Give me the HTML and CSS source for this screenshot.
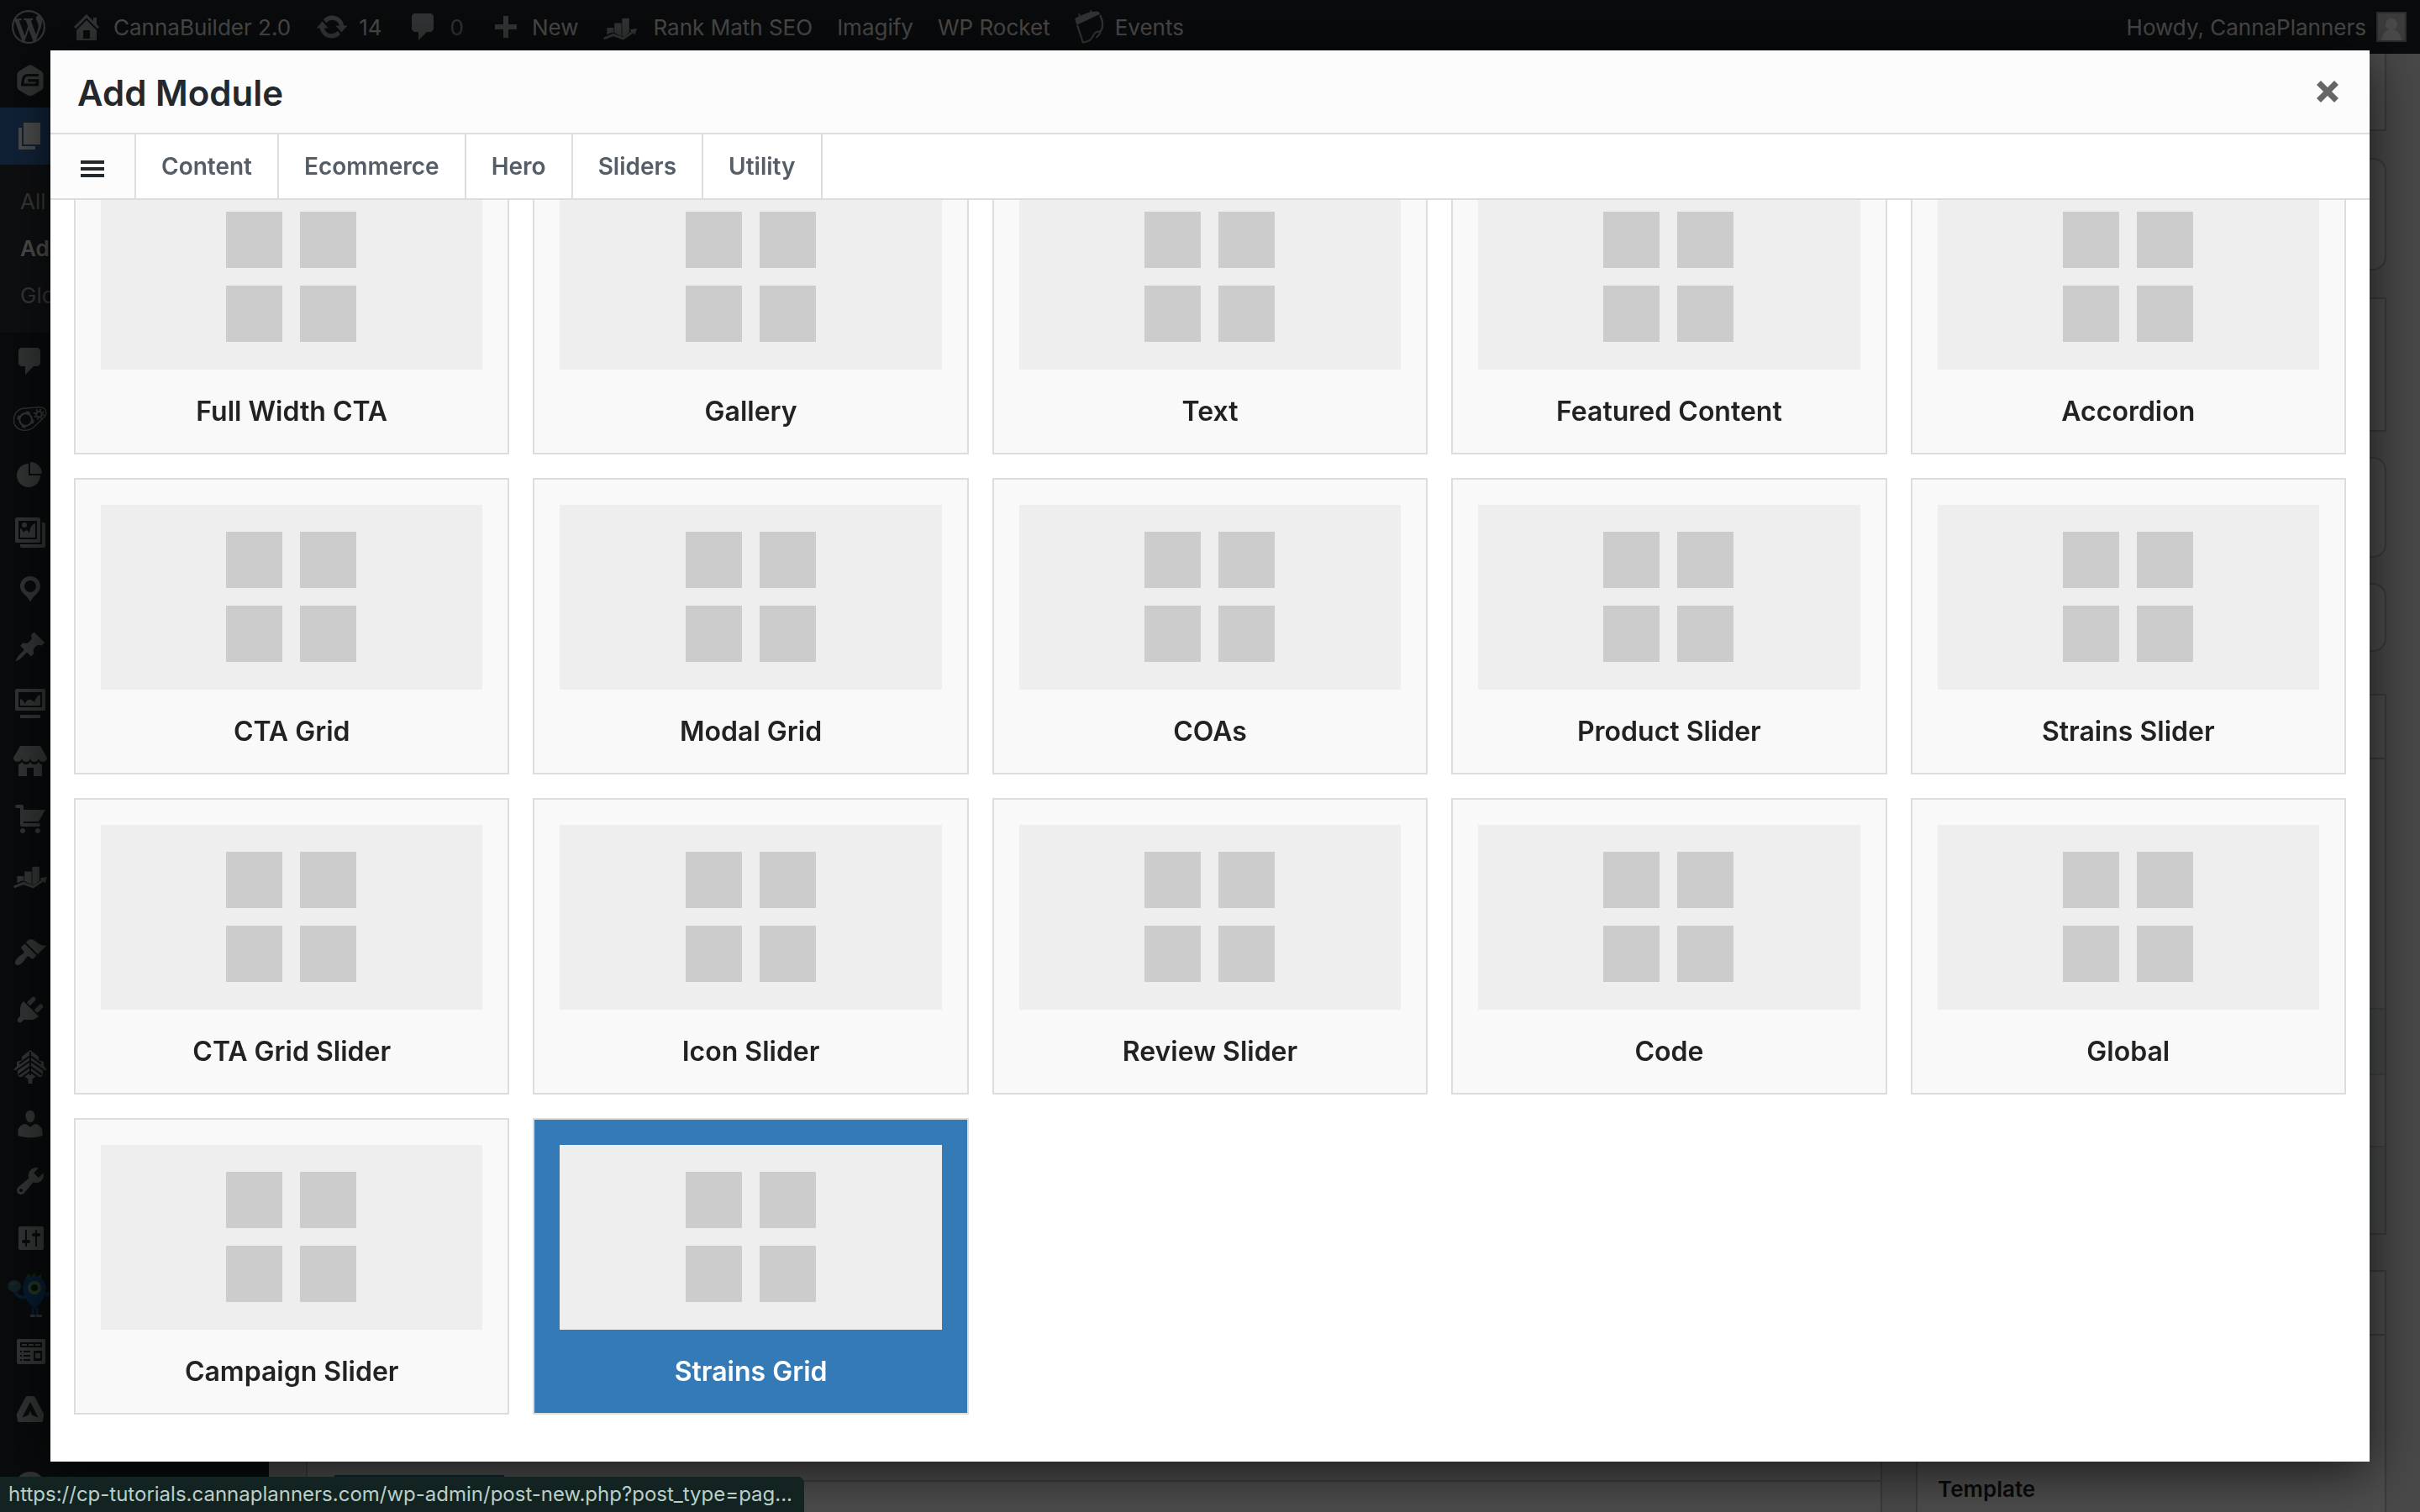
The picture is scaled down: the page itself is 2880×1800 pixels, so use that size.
FILE: index.html
```html
<!DOCTYPE html>
<html lang="en">
<head>
    <meta charset="UTF-8">
    <meta name="viewport" content="width=device-width, initial-scale=1.0">
    <title>Add New Page</title>
    <link rel="stylesheet" href="styles.css">
</head>
<body>
    <!-- shared icons -->
    <svg class="sprite" aria-hidden="true">
        <symbol id="blocks" viewBox="0 0 156 156">
            <path d="M0 0h67v67H0zM88 0h67v67H88zM0 88h67v67H0zM88 88h67v67H88z"/>
        </symbol>
        <symbol id="rank" viewBox="0 0 20 20">
            <path d="M2.2 10.500h4v3L5 13.200l-2.800 1.400zM6.600 7.700h4.200v7.800l-4.200-2zM11.200 4.900h4.200v8.300l-3.200 2.500-1-.2z"/>
            <path d="M0 16.400l5.900-2.500 5.900 2.100 4.800-3.100-.8-1.300 4.200-.6-1.200 3.700-.9-1.100-6 4.200-6-2.200-5.300 2z"/>
        </symbol>
        <symbol id="comment" viewBox="0 0 20 20">
            <path d="M5 2h9c1.100 0 2 .9 2 2v7c0 1.100-.9 2-2 2h-2l-5 5v-5H5c-1.100 0-2-.9-2-2V4c0-1.100.9-2 2-2z"/>
        </symbol>
    </svg>

    <header class="adminbar">
        <a href="#" aria-label="About WordPress"><svg viewBox="0 0 20 20"><path d="M20 10c0-5.510-4.490-10-10-10C4.480 0 0 4.490 0 10c0 5.520 4.480 10 10 10 5.510 0 10-4.480 10-10zM7.780 15.370L4.370 6.220c.55-.02 1.170-.08 1.170-.08.5-.06.44-1.130-.06-1.110 0 0-1.450.11-2.370.11-.18 0-.37 0-.58-.01C4.120 2.690 6.870 1.110 10 1.110c2.330 0 4.450.87 6.050 2.340-.68-.11-1.650.39-1.650 1.580 0 .74.45 1.360.9 2.100.35.61.55 1.360.55 2.460 0 1.490-1.400 5-1.400 5l-3.030-8.370c.54-.02.82-.17.82-.17.5-.05.44-1.250-.06-1.220 0 0-1.440.12-2.380.12-.87 0-2.330-.12-2.330-.12-.5-.03-.56 1.200-.06 1.220l.92.08 1.260 3.410zM17.410 10c.24-.64.74-1.870.43-4.250.7 1.290 1.050 2.710 1.050 4.250 0 3.290-1.730 6.240-4.400 7.780.97-2.590 1.940-5.200 2.920-7.780zM6.100 18.090C3.120 16.650 1.110 13.530 1.110 10c0-1.300.23-2.480.72-3.590C3.250 10.300 4.670 14.200 6.100 18.090zm4.030-6.630l2.580 6.980c-.86.29-1.760.45-2.710.45-.79 0-1.570-.11-2.290-.33.81-2.380 1.620-4.740 2.420-7.100z"/></svg></a>
        <a href="#"><svg viewBox="0 0 20 20"><path d="M16 8.500l1.530 1.530-1.060 1.060L10 4.600l-6.470 6.470-1.060-1.060L10 2.470l4 4v-2h2v4zm-6-2.460l6 5.990V18H4v-5.970zM12 17v-5H8v5h4z"/></svg>CannaBuilder 2.0</a>
        <a href="#"><svg viewBox="0 0 20 20"><path d="M10.200 3.280c3.530 0 6.430 2.610 6.920 6h2.080l-3.500 4-3.500-4h2.320c-.45-1.970-2.210-3.450-4.320-3.450-1.450 0-2.730.71-3.540 1.780L4.950 5.660C6.230 4.200 8.110 3.280 10.200 3.280zm-.4 13.440c-3.520 0-6.430-2.610-6.920-6H.8l3.500-4c1.170 1.330 2.330 2.670 3.500 4H5.480c.45 1.970 2.210 3.450 4.320 3.450 1.450 0 2.730-.71 3.540-1.780l1.710 1.950c-1.280 1.460-3.150 2.380-5.250 2.380z"/></svg>14</a>
        <a href="#" class="muted"><svg><use href="#comment"/></svg>0</a>
        <a href="#"><svg viewBox="0 0 20 20"><path d="M17 8.500v3h-5v5H9v-5H4v-3h5v-5h3v5h5z"/></svg>New</a>
        <a href="#" class="seo"><svg><use href="#rank"/></svg>Rank Math SEO</a>
        <a href="#">Imagify</a>
        <a href="#">WP Rocket</a>
        <a href="#"><svg class="events" viewBox="0 0 18 20"><path d="M.2 5.800Q0 4.900 1 4.400l1.600-.7L2 2.300l.7-.3.700 1.400 6-2.400L9 .2l.8-.2.500 1 2.700-.3q1.500 0 2.200 1.600L1.300 8.900z"/><path d="M1.500 9l3.400 10.300c4-.8 5-1.600 6.400-4.600.8-1.700 1.500-1.600 4.200-2.200 1.700-2.800 1.300-6-.4-9.500" fill="none" stroke="currentColor" stroke-width="1.100"/><path d="M15.600 12.300q-.8 2.900-3 4.100" fill="none" stroke="currentColor"/></svg>Events</a>
        <a href="#" class="account">Howdy, CannaPlanners<svg class="avatar" viewBox="0 0 36 36"><path class="frame" d="M0 0h36v36H0z"/><path class="bg" d="M2 2h32v32H2z"/><circle cx="18" cy="15" r="7"/><path d="M6 34c1-8 6-13 12-13s11 5 12 13z"/></svg></a>
    </header>

    <div class="wrap">
        <nav class="sidebar" aria-label="Admin menu">
            <a href="#" class="first" aria-label="Forms"><svg viewBox="0 0 20 20"><path fill-rule="evenodd" d="M10 .8q.8 0 1.500.5l5 2.900q1.300.8 1.300 2.200v7.200q0 1.400-1.300 2.200l-5 2.900q-1.500.8-3 0l-5-2.900q-1.300-.8-1.300-2.200V6.400q0-1.400 1.300-2.200l5-2.900Q9.200.8 10 .8zM15 6H8.500C5.800 6 4.700 8 4.500 13.200h10.600V9.100H8.600v1.600h4.700v1H6.300c.1-2.800.8-4.200 2.200-4.200H15z"/></svg></a>
            <a href="#" class="current" aria-label="Pages"><svg viewBox="0 0 20 20"><path d="M6 15V2h10v13H6zm-1 1h8v2H3V5h2v11z"/></svg></a>
            <ul class="submenu">
                <li><a href="#">All Pages</a></li>
                <li><a href="#" class="on">Add New</a></li>
                <li><a href="#">Global</a></li>
            </ul>
            <a href="#" aria-label="Comments"><svg><use href="#comment"/></svg></a>
            <a href="#" aria-label="Automation"><svg viewBox="0 0 20 20"><path d="M5 4.200L15.500 3.400C19 3.300 20.500 6.500 18.600 9l-6.500 6.300C9.500 17.600 5 17.900 2.200 15.600-1.200 12.500-.2 6 5 4.200z" fill="none" stroke="currentColor" stroke-width=".7"/><circle cx="7.300" cy="10.800" r="3.700" fill="none" stroke="currentColor" stroke-width="1.100"/><circle cx="7.300" cy="10.800" r="4.500" fill="none" stroke="currentColor" stroke-width="1.300" stroke-dasharray="2.400 4.700"/><circle cx="15.200" cy="7.600" r="1.700" fill="none" stroke="currentColor" stroke-width="1.100"/><circle cx="15.200" cy="7.600" r="2.800" fill="none" stroke="currentColor" stroke-width="1.100" stroke-dasharray="1 1.200"/></svg></a>
            <a href="#" aria-label="Reports"><svg viewBox="0 0 20 20"><path d="M10 9V2c3.870 0 7 3.130 7 7h-7zM9 3v7h7c0 3.870-3.130 7-7 7s-7-3.130-7-7 3.130-7 7-7z"/></svg></a>
            <a href="#" aria-label="Gallery"><svg viewBox="0 0 20 20"><path fill-rule="evenodd" d="M2 1h13q1 0 1 1v13q0 1-1 1H2q-1 0-1-1V2q0-1 1-1zm1 2v11h11V3z"/><path d="M4 13V7.500q1.200.3 2 2.500 2-3 3.500.5C10 6.500 11 5 13 4.500V13z"/><circle cx="6.500" cy="5.500" r="1.500"/><path d="M17 4h1q1 0 1 1v13q0 1-1 1H5q-1 0-1-1v-1h13z"/></svg></a>
            <a href="#" aria-label="Locations"><svg viewBox="0 0 20 20"><path d="M10 2C6.690 2 4 4.690 4 8c0 2.020 1.170 3.710 2.530 4.890.43.37 1.180.96 1.850 1.830.74.97 1.410 2.010 1.620 2.710.21-.7.88-1.740 1.620-2.710.67-.87 1.420-1.460 1.850-1.830C14.830 11.710 16 10.020 16 8c0-3.310-2.690-6-6-6zm0 2.560c1.900 0 3.440 1.540 3.440 3.440S11.900 11.440 10 11.440 6.560 9.900 6.560 8 8.100 4.560 10 4.560z"/></svg></a>
            <a href="#" aria-label="Posts"><svg viewBox="0 0 20 20"><path d="M10.440 3.020l1.820-1.820 6.360 6.350-1.830 1.820c-1.050-.68-2.480-.57-3.410.36l-.75.75c-.92.93-1.040 2.350-.35 3.410l-1.830 1.820-2.410-2.410-2.800 2.790c-.42.42-3.380 2.710-3.800 2.290s1.860-3.390 2.280-3.810l2.790-2.790L4.100 9.360l1.830-1.820c1.050.69 2.480.57 3.400-.36l.75-.75c.93-.92 1.050-2.350.36-3.410z"/></svg></a>
            <a href="#" aria-label="Slides"><svg viewBox="0 0 20 20"><path fill-rule="evenodd" d="M2 1h16q1 0 1 1v11q0 1-1 1H2q-1 0-1-1V2q0-1 1-1zm1 2v9h14V3z"/><path d="M4 11V7q1.800.5 2.800 3 1.700-3.500 4-2.300 1.200.5 1.700 1.300Q13.500 5 16 4.500V11zM4 16.500h12v2H4z"/></svg></a>
            <a href="#" aria-label="Store"><svg viewBox="0 0 20 20"><path d="M1 10c.41.29.96.43 1.500.43.55 0 1.090-.14 1.500-.43.62-.46 1-1.170 1-2 0 .83.37 1.540 1 2 .41.29.96.43 1.500.43.55 0 1.090-.14 1.500-.43.62-.46 1-1.170 1-2 0 .83.37 1.540 1 2 .41.29.96.43 1.510.43.540 0 1.080-.14 1.490-.43.62-.46 1-1.170 1-2 0 .83.37 1.540 1 2 .41.29.96.43 1.500.43.55 0 1.090-.14 1.500-.43.63-.46 1-1.170 1-2L16 1H4L0 8c0 .83.37 1.540 1 2zm2 9h5v-5h4v5h5v-7c-.37-.05-.72-.22-1-.43-.63-.45-1-.73-1-1.560 0 .83-.38 1.110-1 1.560-.41.3-.95.43-1.490.44-.55 0-1.100-.14-1.510-.44-.63-.45-1-.73-1-1.560 0 .83-.38 1.110-1 1.560-.41.3-.95.43-1.500.44-.54 0-1.090-.14-1.500-.44-.63-.45-1-.73-1-1.570 0 .84-.38 1.120-1 1.570-.29.21-.63.38-1 .44z"/></svg></a>
            <a href="#" aria-label="Products"><svg viewBox="0 0 20 20"><path d="M6 13h9c.55 0 1 .45 1 1s-.45 1-1 1H5c-.55 0-1-.45-1-1V4H2c-.55 0-1-.45-1-1s.45-1 1-1h3c.55 0 1 .45 1 1v2h13l-4 7H6v1zm-.5 3c.83 0 1.500.67 1.500 1.500S6.330 19 5.500 19 4 18.330 4 17.500 4.670 16 5.500 16zm9 0c.83 0 1.500.67 1.500 1.500s-.67 1.500-1.500 1.500-1.500-.67-1.500-1.500.67-1.500 1.500-1.500z"/></svg></a>
            <a href="#" aria-label="Rank Math"><svg><use href="#rank"/></svg></a>
            <hr>
            <a href="#" aria-label="Appearance"><svg viewBox="0 0 20 20"><path d="M14.480 11.060L7.410 3.990l1.500-1.500c.5-.56 2.300-.47 3.510.32 1.210.8 1.430 1.280 2.910 2.100 1.180.64 2.450 1.260 4.450.85zm-.71.71L6.700 4.700 4.930 6.470c-.39.39-.39 1.020 0 1.410l1.060 1.060c.39.39.39 1.030 0 1.420-.6.6-1.430 1.110-2.210 1.690-.35.26-.7.53-1.010.84C1.430 14.230.4 16.080 1.400 17.070c.99 1 2.840-.03 4.180-1.360.31-.31.58-.66.85-1.020.57-.78 1.080-1.610 1.690-2.210.39-.39 1.020-.39 1.410 0l1.060 1.060c.39.39 1.020.39 1.410 0z"/></svg></a>
            <a href="#" aria-label="Plugins"><svg viewBox="0 0 20 20"><path d="M13.110 4.360L9.870 7.600 8 5.730l3.240-3.240c.35-.34 1.050-.2 1.560.32.52.51.66 1.210.31 1.550zm-8 1.770l.91-1.120 9.010 9.010-1.190.84c-.71.71-2.630 1.160-3.820 1.160H6.140L4.900 17.260c-.59.59-1.540.59-2.120 0-.59-.58-.59-1.530 0-2.120l1.240-1.240v-3.880c0-1.130.4-3.190 1.090-3.890zm7.260 3.970l3.240-3.240c.34-.35 1.040-.21 1.550.31.52.51.66 1.210.31 1.550l-3.240 3.250z"/></svg></a>
            <a href="#" aria-label="Strains"><svg viewBox="0 0 20 20"><path d="M10 0l5 4v2l3 1v2.500l2 2.500H17.500v3l-1 1H13L11 17.500h.2V20H8.800v-2.500H9L7 16H3.500l-1-1v-3H0l2-2.500V7l3-1V4z"/><path class="cut" d="M10 1v14M3.500 8.200L10 3.500l6.500 4.700M2 12l8-5.500 8 5.500M3 14.800l7-5 7 5M5 16.500l5-3.700 5 3.700"/></svg></a>
            <a href="#" aria-label="Users"><svg viewBox="0 0 20 20"><path d="M10 9.250c-2.270 0-2.730-3.440-2.730-3.440C7 4.020 7.820 2 9.970 2c2.160 0 2.980 2.020 2.710 3.810 0 0-.41 3.440-2.680 3.440zm0 2.570L12.720 10c2.390 0 4.520 2.330 4.520 4.530v2.490s-3.650 1.130-7.240 1.130c-3.650 0-7.240-1.130-7.240-1.130v-2.490c0-2.250 1.940-4.480 4.470-4.480z"/></svg></a>
            <a href="#" aria-label="Tools"><svg viewBox="0 0 20 20"><path d="M16.680 9.770c-1.340 1.340-3.300 1.670-4.950.99l-5.410 6.520c-.99.99-2.590.99-3.580 0s-.99-2.590 0-3.570l6.520-5.420c-.68-1.650-.35-3.610.99-4.950 1.280-1.280 3.120-1.620 4.720-1.060l-2.890 2.890 2.820 2.820 2.860-2.870c.53 1.580.18 3.390-1.080 4.650zM3.810 16.210c.4.39 1.040.39 1.430 0 .4-.4.4-1.040 0-1.430-.39-.4-1.030-.4-1.430 0-.39.39-.39 1.030 0 1.430z"/></svg></a>
            <a href="#" aria-label="Settings"><svg viewBox="0 0 20 20"><path d="M18 16V4c0-.55-.45-1-1-1H4c-.55 0-1 .45-1 1v12c0 .55.45 1 1 1h13c.55 0 1-.45 1-1zM8 11h1c.55 0 1 .45 1 1s-.45 1-1 1H8v1.500c0 .28-.22.5-.5.5s-.5-.22-.5-.5V13H6c-.55 0-1-.45-1-1s.45-1 1-1h1V5.500c0-.28.22-.5.5-.5s.5.22.5.5V11zm5-2h-1c-.55 0-1-.45-1-1s.45-1 1-1h1V5.500c0-.28.22-.5.5-.5s.5.22.5.5V7h1c.55 0 1 .45 1 1s-.45 1-1 1h-1v5.500c0 .28-.22.5-.5.5s-.5-.22-.5-.5V9z"/></svg></a>
            <a href="#" aria-label="WP All Import"><svg class="monster" viewBox="0 0 56 56"><path d="M9 20q2 12 14 10M46 28q10-2 9-14" fill="none" stroke="#1c5b9c" stroke-width="4"/><ellipse cx="9" cy="17" rx="8" ry="7" fill="#3b6b80"/><path d="M2 15q6-5 12-2-4 4-12 2z" fill="#5b7d62"/><path d="M22 8l4-6 3 4 4-5 2 5 6-3v7z" fill="#2f7a3c"/><path d="M20 14q3-9 12-9t14 9q3 16-12 30Q17 32 20 14z" fill="#17579f"/><circle cx="33" cy="19" r="8" fill="#6aa36b"/><circle cx="33" cy="19" r="4" fill="#14301c"/><path d="M31 43v9M36 43v9" stroke="#1c5b9c" stroke-width="3"/><path d="M28 51h6v3h-6zM35 51h7v3h-7z" fill="#8fa287"/></svg></a>
            <a href="#" aria-label="Fields"><svg viewBox="0 0 20 20"><path fill-rule="evenodd" d="M3 2h15q1 0 1 1v13q0 1-1 1H3q-1 0-1-1V3q0-1 1-1zm1 2v3h13V4zm8 5v6h5V9zm1 1.500h3v3h-3zM4 9v1h1V9zm2 0v1h4V9zm-2 2.500v1h1v-1zm2 0v1h4v-1zM4 14v1h1v-1zm2 0v1h4v-1z"/><path d="M5 5h3v1H5zM9 5h3v1H9zM13 5h3v1h-3z"/></svg></a>
            <a href="#" aria-label="Builder"><svg viewBox="0 0 20 20"><path fill-rule="evenodd" d="M8.500 2h3q1 0 1.500 1l5 9.500q.3.500 0 1.300l-.5 3.200q-.2.500-.8.500H3.300q-.6 0-.8-.5L2 13.800q-.3-.7 0-1.300L7 3q.5-1 1.500-1zM10 5.500L5.200 14.800 9 13.200l1-2.400 1 2.400 3.800 1.600z"/></svg></a>
            <hr>
            <a href="#" aria-label="Collapse menu"><svg viewBox="0 0 20 20"><path fill-rule="evenodd" d="M10 1a9 9 0 100 18 9 9 0 000-18zM12 5v10l-5-5z"/></svg></a>
        </nav>

        <main class="editor">
            <section class="content">
                <div class="postbox sections"></div>
                <div class="postbox actions"><button type="button" aria-label="Add Module"></button></div>
            </section>
            <aside class="side">
                <div class="postbox preview-tab"></div>
                <div class="postbox round summary"></div>
                <div class="postbox notice"></div>
                <div class="postbox round status"></div>
                <div class="postbox round score"></div>
                <div class="postbox publish">
                    <div class="bar"></div>
                    <div class="fill"></div>
                    <div class="row tint"></div>
                    <div class="row"></div>
                    <div class="row tint last"></div>
                </div>
                <div class="postbox attributes">
                    <div class="bar"></div>
                    <h2>Template</h2>
                </div>
            </aside>
        </main>
    </div>

    <div class="overlay"></div>

    <div class="modal" role="dialog" aria-labelledby="modal-title">
        <div class="modal-header">
            <h1 id="modal-title">Add Module</h1>
            <button type="button" class="close" aria-label="Close"><svg viewBox="0 0 24 24"><path d="M3 3l18 18M21 3L3 21"/></svg></button>
        </div>
        <nav class="tabs">
            <button type="button" class="toggle" aria-label="All modules"><span></span><span></span><span></span></button>
            <button type="button">Content</button>
            <button type="button">Ecommerce</button>
            <button type="button">Hero</button>
            <button type="button">Sliders</button>
            <button type="button">Utility</button>
        </nav>
        <div class="modal-body">
            <div class="modules">
                <a href="#" class="module"><span class="thumb"><svg><use href="#blocks"/></svg></span><span class="name">Full Width CTA</span></a>
                <a href="#" class="module"><span class="thumb"><svg><use href="#blocks"/></svg></span><span class="name">Gallery</span></a>
                <a href="#" class="module"><span class="thumb"><svg><use href="#blocks"/></svg></span><span class="name">Text</span></a>
                <a href="#" class="module"><span class="thumb"><svg><use href="#blocks"/></svg></span><span class="name">Featured Content</span></a>
                <a href="#" class="module"><span class="thumb"><svg><use href="#blocks"/></svg></span><span class="name">Accordion</span></a>
                <a href="#" class="module"><span class="thumb"><svg><use href="#blocks"/></svg></span><span class="name">CTA Grid</span></a>
                <a href="#" class="module"><span class="thumb"><svg><use href="#blocks"/></svg></span><span class="name">Modal Grid</span></a>
                <a href="#" class="module"><span class="thumb"><svg><use href="#blocks"/></svg></span><span class="name">COAs</span></a>
                <a href="#" class="module"><span class="thumb"><svg><use href="#blocks"/></svg></span><span class="name">Product Slider</span></a>
                <a href="#" class="module"><span class="thumb"><svg><use href="#blocks"/></svg></span><span class="name">Strains Slider</span></a>
                <a href="#" class="module"><span class="thumb"><svg><use href="#blocks"/></svg></span><span class="name">CTA Grid Slider</span></a>
                <a href="#" class="module"><span class="thumb"><svg><use href="#blocks"/></svg></span><span class="name">Icon Slider</span></a>
                <a href="#" class="module"><span class="thumb"><svg><use href="#blocks"/></svg></span><span class="name">Review Slider</span></a>
                <a href="#" class="module"><span class="thumb"><svg><use href="#blocks"/></svg></span><span class="name">Code</span></a>
                <a href="#" class="module"><span class="thumb"><svg><use href="#blocks"/></svg></span><span class="name">Global</span></a>
                <a href="#" class="module"><span class="thumb"><svg><use href="#blocks"/></svg></span><span class="name">Campaign Slider</span></a>
                <a href="#" class="module active"><span class="thumb"><svg><use href="#blocks"/></svg></span><span class="name">Strains Grid</span></a>
            </div>
        </div>
    </div>

    <div class="statusbar">https://cp-tutorials.cannaplanners.com/wp-admin/post-new.php?post_type=pag...</div>
</body>
</html>
```

FILE: styles.css
```css
* {
    box-sizing: border-box;
}
body {
    margin: 0;
    height: 100vh;
    overflow: hidden;
    display: flex;
    flex-direction: column;
    background: #f0f0f1;
    font-family: Inter, "Liberation Sans", sans-serif;
    font-size: 26px;
    color: #1d2327;
}
a {
    color: inherit;
    text-decoration: none;
}
button {
    font: inherit;
    border: 0;
    padding: 0;
    background: none;
    cursor: pointer;
}
svg {
    display: block;
    flex: none;
    fill: currentColor;
}
.sprite {
    display: none;
}

/* admin bar */
.adminbar {
    display: flex;
    align-items: center;
    gap: 29px;
    height: 64px;
    flex: none;
    padding: 0 16px 0 14px;
    background: #1d2327;
    color: #f0f0f1;
    white-space: nowrap;
}
.adminbar a {
    display: flex;
    align-items: center;
    gap: 12px;
}
.adminbar svg {
    width: 40px;
    height: 40px;
    color: #a7aaad;
}
.adminbar .muted {
    color: #a0a0a0;
}
.adminbar .seo {
    gap: 20px;
}
.adminbar .events {
    width: 36px;
}
.adminbar .account {
    margin-left: auto;
}
.adminbar .avatar {
    width: 36px;
    height: 36px;
    color: #f5f5f5;
}
.avatar .frame {
    fill: #8c8f94;
}
.avatar .bg {
    fill: #c5c5c5;
}

/* page behind the dialog */
.wrap {
    display: flex;
    flex: 1;
    min-height: 0;
    overflow: hidden;
}
.sidebar {
    width: 320px;
    flex: none;
    background: #1d2327;
    color: #a7aaad;
}
.sidebar > a {
    display: flex;
    align-items: center;
    height: 68px;
    padding-left: 16px;
}
.sidebar .first {
    height: 64px;
}
.sidebar .current {
    background: #3870b4;
    color: #fff;
}
.sidebar svg {
    width: 40px;
    height: 40px;
}
.sidebar .monster {
    width: 56px;
    height: 56px;
    margin-left: -8px;
}
.sidebar hr {
    height: 24px;
    margin: 0;
    border: 0;
}
.sidebar .cut {
    fill: none;
    stroke: #1d2327;
    stroke-width: 1;
}
.submenu {
    list-style: none;
    margin: 0;
    padding: 16px 24px;
    background: #2c3338;
    color: #b5b8bb;
}
.submenu a {
    display: block;
    line-height: 56px;
}
.submenu .on {
    color: #fff;
    font-weight: 600;
}
.editor {
    flex: 1;
    display: grid;
    grid-template-columns: 1fr 560px;
    gap: 40px;
    padding: 0 40px 0 44px;
}
.postbox {
    border: 2px solid #c3c4c7;
    background: #fff;
}
.round {
    border-radius: 16px;
}
.sections {
    height: 1698px;
    border-top: 0;
    border-bottom: 0;
}
.actions {
    height: 60px;
}
.actions button {
    display: block;
    width: 202px;
    height: 50px;
    margin: -8px 0 0 32px;
    background: #3870b4;
}
.preview-tab {
    height: 92px;
    border-top: 0;
}
.summary {
    height: 134px;
    margin-top: 32px;
}
.notice {
    height: 160px;
    margin-top: 32px;
}
.status {
    height: 120px;
    margin-top: 30px;
}
.score {
    height: 82px;
    margin-top: 30px;
}
.publish {
    margin-top: 50px;
}
.attributes {
    height: 400px;
    margin-top: 42px;
}
.bar {
    height: 76px;
    border-bottom: 2px solid #c3c4c7;
}
.fill {
    height: 296px;
}
.row {
    height: 86px;
    border-top: 2px solid #dcdcde;
}
.row.tint {
    height: 78px;
    background: #eff4f3;
}
.row.last {
    height: 104px;
}
.attributes h2 {
    margin: 167px 0 0 24px;
    font-size: 26px;
    line-height: 32px;
    font-weight: 600;
}

.overlay {
    position: fixed;
    inset: 0;
    background: rgba(0, 0, 0, 0.7);
}

/* dialog */
.modal {
    position: fixed;
    inset: 60px;
    display: flex;
    flex-direction: column;
    background: #fff;
    box-shadow: 0 10px 60px rgba(0, 0, 0, 0.7);
}
.modal-header {
    display: flex;
    align-items: center;
    justify-content: space-between;
    height: 100px;
    flex: none;
    padding: 0 36px 0 32px;
    background: #fcfcfc;
    border-bottom: 2px solid #ddd;
}
.modal-header h1 {
    margin: 0;
    padding-top: 4px;
    font-size: 42px;
    line-height: 60px;
    font-weight: 600;
    color: #23282d;
}
.close svg {
    width: 28px;
    height: 28px;
    fill: none;
    stroke: #666;
    stroke-width: 6;
}
.tabs {
    display: flex;
    flex: none;
    height: 78px;
    border-bottom: 2px solid #ddd;
}
.tabs button {
    padding: 0 30px;
    border-right: 2px solid #ddd;
    font-size: 28px;
    font-weight: 600;
    color: #555d66;
}
.tabs .toggle {
    display: flex;
    flex-direction: column;
    justify-content: center;
    gap: 4px;
    width: 102px;
    padding: 6px 36px 0;
    background: #fcfcfc;
}
.toggle span {
    height: 4px;
    background: #23282d;
}
.modal-body {
    flex: 1;
    min-height: 0;
    overflow: hidden;
    padding: 0 28px;
}
/* list is scrolled down to the last row */
.modules {
    display: grid;
    grid-template-columns: repeat(5, 1fr);
    gap: 28px;
    margin-top: -50px;
}
.module {
    padding: 30px;
    border: 2px solid #ddd;
    background: #f9f9f9;
    color: #222;
    text-align: center;
}
.module.active {
    background: #337ab7;
    color: #fff;
}
.thumb {
    display: flex;
    align-items: center;
    justify-content: center;
    height: 220px;
    background: #eee;
    color: #ccc;
}
.thumb svg {
    width: 156px;
    height: 156px;
}
.name {
    display: block;
    margin-top: 30px;
    font-size: 32px;
    line-height: 39px;
    font-weight: 600;
}

/* link address shown by the browser */
.statusbar {
    position: fixed;
    left: 0;
    bottom: 0;
    padding: 0 14px 0 10px;
    border-radius: 0 8px 0 0;
    background: #122321;
    color: #b9cfc8;
    font-size: 24px;
    line-height: 42px;
}
```
